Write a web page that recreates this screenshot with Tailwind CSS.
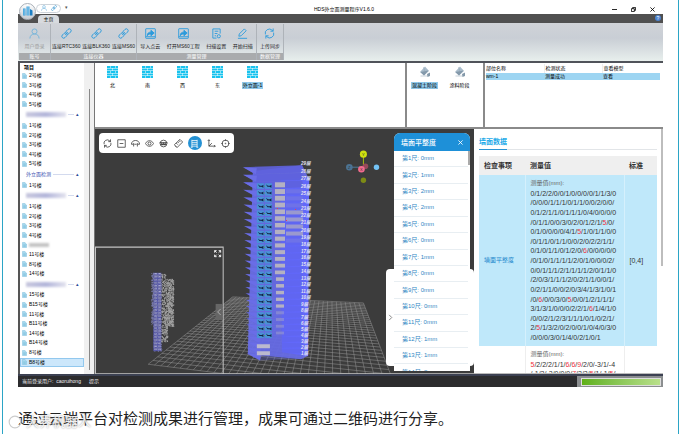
<!DOCTYPE html>
<html lang="zh-CN">
<head>
    <meta charset="UTF-8">
    <meta name="viewport" content="width=device-width, initial-scale=1.0">
    <title>HDS外立面测量程序V1.6.0</title>
    <script src="https://cdn.jsdelivr.net/npm/@tailwindcss/browser@4"></script>
</head>
<body class="bg-white font-['Liberation_Sans','Noto_Sans_CJK_SC',sans-serif] text-[5px] leading-[7px] text-black">
<!-- Icon set -->
<svg class="hidden">
    <symbol id="user" viewBox="0 0 24 24"><circle cx="12" cy="7.500" r="5.500"/><path d="M2 23c0-6 4-10 10-10s10 4 10 10"/></symbol>
    <symbol id="link" viewBox="0 0 24 24"><rect x="12" y="1" width="8" height="13" rx="4" transform="rotate(45 16 8)"/><rect x="4" y="10" width="8" height="13" rx="4" transform="rotate(45 8 16)"/><path d="M9 15l6-6"/></symbol>
    <symbol id="share" viewBox="0 0 24 24"><rect x="1.500" y="1.500" width="21" height="21" rx="1"/><path d="M1.500 19h21" /><path d="M5 17c0-6 3-8 8-8V5l7 6-7 6v-4c-4 0-6 1-8 4z" fill="currentColor"/></symbol>
    <symbol id="scanset" viewBox="0 0 24 24"><path d="M20 12V2H4v20h8M8 7h8M8 12h6M8 17h3"/><circle cx="17" cy="18" r="3.500"/></symbol>
    <symbol id="pen" viewBox="0 0 24 24"><path d="M4 18l1-5L16 2l4 4L9 17zM2 22.500h20"/></symbol>
    <symbol id="sync" viewBox="0 0 24 24"><path d="M3 14A9 9 0 0 1 18 5l2 2M20 1v6h-6M21 10a9 9 0 0 1-15 9l-2-2M4 23v-6h6"/></symbol>
    <symbol id="wall" viewBox="0 0 22 24"><path fill="currentColor" stroke="none" d="M0 0h6v4H0zM7 0h9v4H7zM17 0h5v4h-5zM0 5h11v4H0zM12 5h10v4H12zM0 10h6v4H0zM7 10h9v4H7zM17 10h5v4h-5zM0 15h11v4H0zM12 15h10v4H12zM0 20h6v4H0zM7 20h9v4H7zM17 20h5v4h-5z"/></symbol>
    <symbol id="bucket" viewBox="0 0 24 24"><path fill="#a9bccb" stroke="none" d="M12 1l8 9-10 9-8-7z"/><path fill="#8499aa" stroke="none" d="M3 12l16-3-9 10zM16 16l6-3v7l-5 2z"/><path stroke="#8fa3b3" d="M9 2l3 9M3 20h14"/></symbol>
    <symbol id="file" viewBox="0 0 12 14"><path fill="#a8d8ee" stroke="#6db5d6" d="M1 1h6l4 4v8H1z"/><path stroke="#5aa9cd" d="M3 7h6M3 10h6"/></symbol>
</svg>

<div class="mr-px ml-0.5 flex h-screen flex-col border-x border-[#2ba5c6] pr-[15px] pl-[15px]">
    <div class="relative flex min-h-0 flex-1 flex-col">
        <!-- Title bar -->
        <header class="flex h-[14px] shrink-0 items-center pl-[18px]">
            <div class="mt-0.5 flex h-[9px] w-[25px] items-center justify-center gap-1 rounded-full border border-[#cdd3d9] text-[#5aa8d8]">
                <svg class="size-[6px] fill-none stroke-current stroke-2"><use href="#user"/></svg>
                <svg class="size-[6px] fill-none stroke-current stroke-3"><use href="#link"/></svg>
            </div>
            <span class="ml-1 text-[#555]">▾</span>
            <h1 class="flex-1 pt-1 pl-2 text-center">HDS外立面测量程序V1.6.0</h1>
            <div class="flex gap-[14px] pt-1 pr-[8px]">
                <button aria-label="最小化"><svg class="size-[5px] fill-none stroke-black" viewBox="0 0 6 6"><path d="M0 3h6"/></svg></button>
                <button aria-label="还原"><svg class="size-[5px] fill-none stroke-black" viewBox="0 0 6 6"><path d="M.5 2h3.500v3.500H.5zM2 2V.5h3.500V4H4"/></svg></button>
                <button aria-label="关闭"><svg class="size-[5px] fill-none stroke-black" viewBox="0 0 6 6"><path d="M.5.5l5 5M5.500.5l-5 5"/></svg></button>
            </div>
        </header>
        <nav class="flex h-[9px] shrink-0 items-end justify-between bg-[#505050] pr-0.5 pl-[20px]">
            <button class="h-2 w-[21px] rounded-t-sm bg-[#d7dade]">主页</button>
            <button class="mb-0.5 size-[6px] rounded-full bg-[#4c83cf] text-[5px] leading-[6px] text-white">?</button>
        </nav>
        <div class="absolute top-[3px] left-px flex size-[17px] items-center justify-center rounded-full border border-[#aab0b8] bg-linear-to-b from-white to-[#c5cbd2]">
            <svg class="size-[11px]" viewBox="0 0 22 22"><path d="M2 5h5v14H2zM9 1h6v18H9z" fill="#3aa0dc"/><path d="M16 6l5 3v10h-5z" fill="#1c7fc4"/><path d="M3 8h3M3 12h3M3 16h3M12 1v18" stroke="#fff"/></svg>
        </div>

        <!-- Ribbon -->
        <div class="flex h-[40px] shrink-0 border-b-2 border-[#50535a] bg-linear-to-b from-[#d0d3d8] via-[#c9ced5] via-40% to-[#e8efed] px-px pt-px pb-px text-[#222]">
            <section class="flex w-8 flex-col border-r border-[#aeb3b9]">
                <div class="flex flex-1 items-center justify-around text-[#999]">
                    <button class="flex flex-col items-center gap-1"><svg class="size-[11px] fill-none stroke-[#73b3da] stroke-2"><use href="#user"/></svg>用户登录</button>
                </div>
                <h2 class="h-[7px] bg-[#a9abad] text-center text-white">账号</h2>
            </section>
            <section class="flex w-[86px] flex-col border-r border-[#aeb3b9]">
                <div class="flex flex-1 items-center justify-around">
                    <button class="flex flex-col items-center gap-1"><svg class="size-[11px] fill-none stroke-[#2d9bdc] stroke-2"><use href="#link"/></svg>连接RTC360</button>
                    <button class="flex flex-col items-center gap-1"><svg class="size-[11px] fill-none stroke-[#2d9bdc] stroke-2"><use href="#link"/></svg>连接BLK360</button>
                    <button class="flex flex-col items-center gap-1"><svg class="size-[11px] fill-none stroke-[#2d9bdc] stroke-2"><use href="#link"/></svg>连接MS60</button>
                </div>
                <h2 class="h-[7px] bg-[#a9abad] text-center text-white">连接仪器</h2>
            </section>
            <section class="flex w-[120px] flex-col border-r border-[#aeb3b9]">
                <div class="flex flex-1 items-center justify-around">
                    <button class="flex flex-col items-center gap-1"><svg class="size-[11px] fill-none stroke-[#2d9bdc] stroke-2 text-[#2d9bdc]"><use href="#share"/></svg>导入点云</button>
                    <button class="flex flex-col items-center gap-1"><svg class="size-[11px] fill-none stroke-[#2d9bdc] stroke-2 text-[#2d9bdc]"><use href="#share"/></svg>打开MS60工程</button>
                    <button class="flex flex-col items-center gap-1"><svg class="size-[11px] fill-none stroke-[#2d9bdc] stroke-2"><use href="#scanset"/></svg>扫描设置</button>
                    <button class="flex flex-col items-center gap-1"><svg class="size-[11px] fill-none stroke-[#2d9bdc] stroke-2"><use href="#pen"/></svg>开始扫描</button>
                </div>
                <h2 class="h-[7px] bg-[#a9abad] text-center text-white">测量管理</h2>
            </section>
            <section class="flex w-[27px] flex-col border-r border-[#aeb3b9]">
                <div class="flex flex-1 items-center justify-around">
                    <button class="flex flex-col items-center gap-1"><svg class="size-[11px] fill-none stroke-[#2d9bdc] stroke-2"><use href="#sync"/></svg>上传同步</button>
                </div>
                <h2 class="h-[7px] bg-[#a9abad] text-center text-white">数据管理</h2>
            </section>
        </div>

        <div class="flex min-h-0 flex-1 border-l-2 border-[#555]">
            <!-- Project tree -->
            <aside class="flex w-[75px] shrink-0 border-r border-[#777] bg-[#f0f0f0]">
                <div class="flex min-w-0 flex-1 flex-col bg-white pt-px pb-[7px]">
                    <h2 class="pl-1 font-bold">项目</h2>
                    <ul id="tree" class="flex flex-1 flex-col justify-between"></ul>
                </div>
                <div class="flex w-[10px] justify-center pt-[26px] pb-1"><div class="w-px bg-[#888]"></div></div>
            </aside>

            <div class="flex min-w-0 flex-1 flex-col">
                <div class="flex h-[66px] shrink-0 border-b-2 border-[#8a8a8a]">
                    <ul id="walls" class="flex flex-1 pt-[3px] text-[#19c3ee]"></ul>
                    <ul class="flex w-[78px] border-l-2 border-[#8a8a8a] pt-[3px]">
                        <li class="flex w-[35px] flex-col items-center gap-1"><svg class="size-[12px] fill-none"><use href="#bucket"/></svg><span class="bg-[#8fc9ea] px-px">混凝土阶段</span></li>
                        <li class="flex w-[35px] flex-col items-center gap-1"><svg class="size-[12px] fill-none"><use href="#bucket"/></svg><span>涂料阶段</span></li>
                    </ul>
                    <div class="w-[180px] border-l-2 border-[#8a8a8a] pt-px pr-[3px] pl-px">
                        <table class="w-full table-fixed text-left">
                            <thead><tr><th class="h-[9px] border-r border-[#eee] font-normal">部位名称</th><th class="border-r border-[#eee] pl-px font-normal">检测状态</th><th class="pl-px font-normal">查看模型</th></tr></thead>
                            <tbody><tr class="bg-[#9dd5f2]"><td>wm-1</td><td class="pl-px">测量成功</td><td class="pl-px">查看</td></tr></tbody>
                        </table>
                    </div>
                </div>

                <div class="flex min-h-0 flex-1">
                    <!-- 3D view -->
                    <main class="relative min-w-0 flex-1 overflow-hidden bg-[#3c3c3c]">
                        <svg id="scene" class="h-full w-full" viewBox="0 0 377 244" preserveAspectRatio="xMinYMin slice">
                            <g id="grid" stroke="#969696" stroke-width=".5"></g>
                            <g id="tower"></g>
                            <g id="mini"></g>
                            <path d="M.5 244V117.500H127.500V244M0 243.500h377" fill="none" stroke="#c4c4c4"/>
                            <path d="M120 174h7v16h-7z" fill="#666"/>
                            <path d="M125 179l-3 3 3 3" fill="none" stroke="#bbb" stroke-width=".8"/>
                            <path d="M119 123v-2h2M123 121h2v2M125 125v2h-2M121 127h-2v-2M119 121l2 2M125 121l-2 2M125 127l-2-2M119 127l2-2" fill="none" stroke="#fff" stroke-width=".9"/>
                            <path d="M267 25v14" stroke="#a8ba12"/>
                            <path d="M253 38h13" stroke="#4c7898"/>
                            <circle cx="253" cy="38" r="3.300" fill="#4c7393"/>
                            <circle cx="269" cy="37" r="2.800" fill="#96495a"/>
                            <circle cx="265" cy="40" r="3.300" fill="#f36b8e"/>
                            <circle cx="267" cy="25" r="3.500" fill="#cfe00f"/>
                            <circle cx="280" cy="38" r="2.700" fill="#73c3f5"/>
                            <circle cx="267" cy="51" r="2.700" fill="#7d8b16"/>
                            <g font-size="4" fill="#333" text-anchor="middle"><text x="267" y="26.500">Y</text><text x="265" y="41.500">X</text><text x="253" y="39.500">Z</text></g>
                        </svg>

                        <div class="absolute top-1 left-1 flex h-5 w-[135px] items-center justify-around rounded-sm bg-white px-px text-[#333]">
                            <button aria-label="刷新"><svg class="size-[9px] fill-none stroke-current stroke-2"><use href="#sync"/></svg></button>
                            <button aria-label="缩小"><svg class="size-[9px] fill-none stroke-current stroke-2" viewBox="0 0 24 24"><path d="M2 2h20v20H2zM7 12h10"/></svg></button>
                            <button aria-label="剖切"><svg class="size-[9px] fill-none stroke-current stroke-2" viewBox="0 0 24 24"><path d="M1 14C2 7 6 4 12 4s10 3 11 10M1 14h5M18 14h5M9 14h6M7 20v-9M17 20v-9"/></svg></button>
                            <button aria-label="显示"><svg class="size-[9px] fill-none stroke-current stroke-2" viewBox="0 0 24 24"><path d="M1 12c6-10 16-10 22 0-6 10-16 10-22 0z"/><circle cx="12" cy="12" r="4"/></svg></button>
                            <button aria-label="视角"><svg class="size-[9px] fill-none stroke-current stroke-2" viewBox="0 0 24 24"><circle cx="12" cy="12" r="9"/><path d="M1 10h22M4 15h16M7 9v6h4V9M13 9v6h4V9"/></svg></button>
                            <button aria-label="测距"><svg class="size-[9px] fill-none stroke-current stroke-2" viewBox="0 0 24 24"><path d="M1 15L16 1l7 7L8 23zM6 11l4 4M10 8l3 3M13 4l4 4M3 18l3 3"/></svg></button>
                            <button aria-label="实测" class="flex size-[14px] items-center justify-center rounded-full bg-[#2491d4]"><svg class="size-[9px] fill-none stroke-white stroke-2" viewBox="0 0 24 24"><path d="M5 2v20M19 2v20M5 4h14M5 9h14M5 14h14M5 19h14M2 22h5M17 22h5"/></svg></button>
                            <button aria-label="坐标"><svg class="size-[9px] fill-none stroke-current stroke-2" viewBox="0 0 24 24"><path d="M5 2v17h17M2 5l3-3 3 3M19 16l3 3-3 3M5 19l8-8"/></svg></button>
                            <button aria-label="定位"><svg class="size-[9px] fill-none stroke-current stroke-2" viewBox="0 0 24 24"><circle cx="12" cy="12" r="9"/><circle cx="12" cy="12" r="1"/><path d="M12 1v4M12 19v4M1 12h4M19 12h4"/></svg></button>
                        </div>

                        <!-- Drawer behind the ruler list -->
                        <div class="absolute right-0 bottom-2 flex h-[97px] w-[88px] items-center rounded-sm bg-white">
                            <svg class="h-[7px] w-2 fill-none stroke-[#777]" viewBox="0 0 8 8"><path d="M3 1l3 3-3 3"/></svg>
                            <div class="flex h-[77px] w-px flex-col justify-between"><i class="h-[10px] bg-[#6068c8]"></i><i class="h-[10px] bg-[#b0b0e0]"></i><i class="h-[10px] bg-[#ccc]"></i><i class="h-[10px] bg-[#ccc]"></i><i class="h-[10px] bg-[#e66a7c]"></i></div>
                        </div>
                        <section class="absolute top-1 right-1 bottom-[3px] w-[76px] overflow-hidden rounded-t-md bg-white">
                            <h2 class="flex h-[18px] items-center justify-between bg-[#1e90d8] px-[7px] text-[7px] font-medium text-white">墙面平整度
                                <button aria-label="关闭"><svg class="size-[5px] fill-none stroke-white" viewBox="0 0 6 6"><path d="M.5.5l5 5M5.500.5l-5 5"/></svg></button>
                            </h2>
                            <ul id="rulers" class="mr-0.5 flex h-[230px] flex-col text-[6px] text-[#3187c4]"></ul>
                            <div class="absolute top-[18px] right-0 h-[14px] w-0.5 bg-[#aaa]"></div>
                        </section>
                    </main>

                    <!-- Wall data -->
                    <aside class="flex w-[189px] shrink-0 overflow-hidden border-b border-[#bbb] bg-white">
                        <div class="min-w-0 flex-1 px-1 pt-2 pl-[5px]">
                            <div class="flex h-[13px] border-b border-[#e2e5e8]"><h2 class="h-[13px] border-b border-[#2a94d4] text-[7px] leading-[9px] font-bold text-[#1eaae8]">墙面数据</h2></div>
                            <table class="mt-[6px] w-full table-fixed text-left text-[7px] leading-[9px] text-[#333]">
                                <thead class="bg-[#efefef]">
                                    <tr><th class="h-[19px] w-[46px] pl-[5px]">检查事项</th><th class="pl-[5px]">测量值</th><th class="w-[33px] pl-[5px]">标准</th></tr>
                                </thead>
                                <tbody>
                                    <tr class="bg-[#bfe8fa]">
                                        <td class="border-r border-[#d5f0fc] pl-[5px] text-[6px] text-[#2187cc]">墙面平整度</td>
                                        <td class="border-r border-[#d5f0fc] py-1 pl-[5px]"><div id="values" class="flex h-[163px] flex-col justify-between whitespace-nowrap"></div></td>
                                        <td class="pl-[5px]">[0,4]</td>
                                    </tr>
                                    <tr>
                                        <td class="border-r border-[#eee]"></td>
                                        <td class="border-r border-[#eee] pt-1 pl-[5px]"><div id="more" class="flex h-[28px] flex-col justify-between whitespace-nowrap"></div></td>
                                        <td></td>
                                    </tr>
                                </tbody>
                            </table>
                        </div>
                        <div class="h-[137px] w-0.5 bg-[#bdbdbd]"></div>
                    </aside>
                </div>
            </div>
        </div>

        <footer class="flex h-[13px] shrink-0 items-center border-t-2 border-[#3c4152] bg-[#2c2c2e] pl-1 text-[#eee]">
            <span>当前登录用户:&nbsp; caoruihong</span>
            <span class="ml-2 flex-1">提示</span>
            <div class="flex h-full w-[86px] items-center bg-[#8b8e90] pr-0.5 pl-1">
                <div role="progressbar" aria-label="进度" class="h-2 flex-1 border border-[#ddd] bg-linear-to-r from-[#5fb013] to-[#b9e08a]"></div>
            </div>
        </footer>
    </div>

    <p class="relative flex h-[47px] shrink-0 items-center pt-4 text-[15px] leading-5 text-[#222]">通过云端平台对检测成果进行管理，成果可通过二维码进行分享。
        <span class="absolute bottom-1 -left-[10px] flex items-center gap-1 text-[13px] leading-4 text-white/85 text-shadow-[0_0_2px_#888]">
            <svg class="size-[14px] fill-none stroke-[#ccc] stroke-2" viewBox="0 0 24 24"><circle cx="12" cy="12" r="10"/><path d="M8 6v7a4 4 0 0 0 8 0" stroke="#fff" stroke-width="4"/></svg>大界机器人
        </span>
    </p>
</div>

<script>
    // Project tree: null is a group whose name is masked
    const tree = [
        '2号楼', '3号楼', '4号楼', '5号楼',
        { group: null }, '1号楼', '2号楼', '3号楼', '4号楼', '5号楼',
        { group: '外立面检测' }, '1号楼',
        { group: null }, '1号楼', '2号楼', '3号楼', '4号楼', '', '11号楼', '8号楼', '14号楼',
        { group: null }, '15号楼', 'B15号楼', '11号楼', 'B11号楼', '14号楼', 'B14号楼', '8号楼', 'B8号楼'
    ];
    document.getElementById('tree').innerHTML = tree.map((row, i) => {
        if (typeof row === 'object') {
            const name = row.group
                ? `<span class="text-[#3b4fb0]">${row.group}</span>`
                : '<span class="h-[5px] w-10 bg-linear-to-r from-[#c9c9df] via-[#b3b6da] to-[#e3e3ef] blur-[1px]"></span>';
            return `<li class="flex h-[11px] items-center gap-0.5 pl-[6px] pr-[2px]">${name}<span class="h-px flex-1 bg-[#d3daee]"></span><span class="w-[6px] text-[#2c4a9a]">▴</span></li>`;
        }
        const text = row || '<span class="block h-1 w-5 bg-[#c4c4c4] blur-[1px]"></span>';
        const last = i === tree.length - 1 ? 'border border-[#92c8ee] bg-[#cce7fb]' : 'border border-transparent';
        return `<li class="flex h-[9px] items-center gap-0.5 pl-px ${last}"><svg class="h-[6px] w-[5px] shrink-0 fill-none"><use href="#file"/></svg>${text}</li>`;
    }).join('');

    document.getElementById('walls').innerHTML = ['北', '南', '西', '东', '外立面-1'].map((name, i) =>
        `<li class="flex w-[35px] flex-col items-center gap-1"><svg class="h-[12px] w-[11px]"><use href="#wall"/></svg><span class="px-px whitespace-nowrap text-black ${i === 4 ? 'bg-[#8fc9ea]' : ''}">${name}</span></li>`
    ).join('');

    document.getElementById('rulers').innerHTML = [0, 1, 2, 2, 0, 0, 1, 0, 0, 0, 0, 1, 1, 2].map((mm, i) =>
        `<li class="flex flex-1 items-center border-b border-[#e8eef2] pl-2">第${i + 1}尺: ${mm}mm</li>`
    ).join('');

    // Out-of-range readings are shown in red
    function lines(id, rows) {
        document.getElementById(id).innerHTML = '<span class="text-[6px] text-[#666]">测量值(mm):</span>' +
            rows.map(r => `<span>${r.replace(/[5-9]/g, '<b class="font-normal text-[#f0303c]">$&</b>')}</span>`).join('');
    }
    lines('values', [
        '0/1/2/2/0/0/1/0/0/0/0/1/1/3/0', '/0/0/0/1/1/1/0/1/1/0/0/2/0/0/', '0/1/2/1/1/0/1/1/1/0/4/0/0/0/0',
        '/0/1/1/0/0/3/0/2/0/1/2/1/5/0/', '0/1/0/0/0/0/4/1/5/1/0/1/1/0/0', '/0/1/1/0/1/1/0/0/2/0/2/2/1/1/',
        '0/1/0/1/1/0/1/2/0/6/0/0/0/0/0', '/0/1/0/1/1/1/1/2/0/1/0/0/0/2/', '0/0/1/1/1/2/1/1/1/1/2/0/1/1/0',
        '/2/0/3/1/1/1/2/0/2/1/1/0/0/1/', '0/2/1/1/0/0/2/0/3/4/1/3/1/0/1', '/0/6/0/0/3/0/5/0/0/1/2/1/1/1/',
        '3/1/3/1/0/0/0/2/2/1/6/1/4/1/0', '/0/0/2/1/2/3/1/1/1/0/1/0/2/1/', '2/5/1/3/2/0/2/0/0/1/0/4/0/3/0',
        '/0/0/0/3/0/1/4/0/2/1/0/1'
    ]);
    lines('more', ['5/2/2/2/1/1/6/6/9/2/0/-3/1/-4', '/-1/2/-2/0/0/0/7/2/2/5/1/-1/5/']);

    // Ground plane in perspective
    const quad = [[137, 167], [267, 173], [302, 265], [53, 234]];
    function project(u, v) {
        const [[x0, y0], [x1, y1], [x2, y2], [x3, y3]] = quad;
        const dx1 = x1 - x2, dx2 = x3 - x2, dx3 = x0 - x1 + x2 - x3;
        const dy1 = y1 - y2, dy2 = y3 - y2, dy3 = y0 - y1 + y2 - y3;
        const det = dx1 * dy2 - dx2 * dy1;
        const g = (dx3 * dy2 - dx2 * dy3) / det, h = (dx1 * dy3 - dx3 * dy1) / det;
        const w = g * u + h * v + 1;
        return [((x1 - x0 + g * x1) * u + (x3 - x0 + h * x3) * v + x0) / w, ((y1 - y0 + g * y1) * u + (y3 - y0 + h * y3) * v + y0) / w];
    }
    let grid = '';
    for (let i = 0; i <= 32; i++) {
        const t = i / 32;
        grid += `<path d="M${project(t, 0)}L${project(t, 1)}M${project(0, t)}L${project(1, t)}"/>`;
    }
    document.getElementById('grid').innerHTML = grid;

    // Tower with one slab per floor
    let tower = '<path d="M157 42L206 36 213 50 211 226 205 229 152 224z" fill="#6a6fe8" opacity=".93"/><path d="M185 50L213 48 212 226 186 222z" fill="#6268fa"/>';
    for (let i = 0; i < 29; i++) {
        const y = 38 + i * 7.6 - i * i * 0.035;
        const left = 148 + i * 0.15;
        tower += `<path d="M${left} ${y}L206 ${y - 2 + i * 0.12}L208 ${y + 5}L${left + 11} ${y + 7}z" fill="#5e62dd" opacity="${i < 3 ? 0.9 : 0.3}"/>`;
        tower += `<path d="M${left - 1} ${y}l14 1 -1 6z" fill="#6a6de6"/>`;
    }
    for (let i = 0; i < 23; i++) {
        const y = 54 + i * 6.75;
        for (const x of [161, 169]) {
            tower += `<path d="M${x} ${y}h7v5.500h-7z" fill="#4a92d6"/><path d="M${x + 1} ${y + 1}l2 1.500h2l1.500-1v3l-2-1h-2z" fill="#142448"/>`;
        }
        tower += `<path d="M168 ${y + 3}h1" stroke="#4ab05c"/><path d="M${i < 14 ? 179 : 180} ${y - 1}h${i < 14 ? 10 : 8}v${5 - i * 0.1}h-${i < 14 ? 10 : 8}z" fill="#b4b1c2" opacity="${i < 19 ? 1 : 0.4}"/>`;
    }
    for (let i = 0; i < 8; i++) {
        tower += `<path d="M190 ${60 + i * 7}h17v4h-17z" fill="#a9a6c6" opacity="${i > 2 && i < 7 ? 0.8 : 0.2}"/>`;
    }
    tower += '<path d="M161 214h13v4h-13zM161 221h13v4h-13z" fill="#bbb9ce"/><path d="M181 79h1M199 80h1M190 91h1" stroke="#e83c55"/>';
    for (let i = 0; i < 29; i++) {
        tower += `<text x="205" y="${36 + i * 7.6 - i * i * 0.03}" font-size="4.500" font-weight="bold" font-style="italic" fill="#e4e4f4">${29 - i}层</text>`;
    }
    document.getElementById('tower').innerHTML = tower;

    // Overview point cloud
    let seed = 7;
    const rand = () => (seed = seed * 16807 % 2147483647) / 2147483647;
    let mini = '<path d="M58 143h8v78h-8z" fill="#5557a8"/>';
    for (let i = 0; i < 26; i++) {
        mini += `<path d="M59 ${144 + i * 3}h2.500M63 ${144 + i * 3}h2.500" stroke="#c4c4e0"/>`;
    }
    for (let i = 0; i < 1500; i++) {
        const x = 56 + rand() * 22;
        const top = x < 66 ? 143 : x < 70 ? 144 : 149;
        const bottom = x < 58 ? 196 : x < 66 ? 221 : x < 72 ? 212 : 196;
        const y = top + rand() * (bottom - top);
        mini += `<rect x="${x}" y="${y}" width=".9" height=".9" fill="${x < 66 ? '#7778a8' : '#a5a5a5'}"/>`;
    }
    document.getElementById('mini').innerHTML = mini;
</script>
</body>
</html>
